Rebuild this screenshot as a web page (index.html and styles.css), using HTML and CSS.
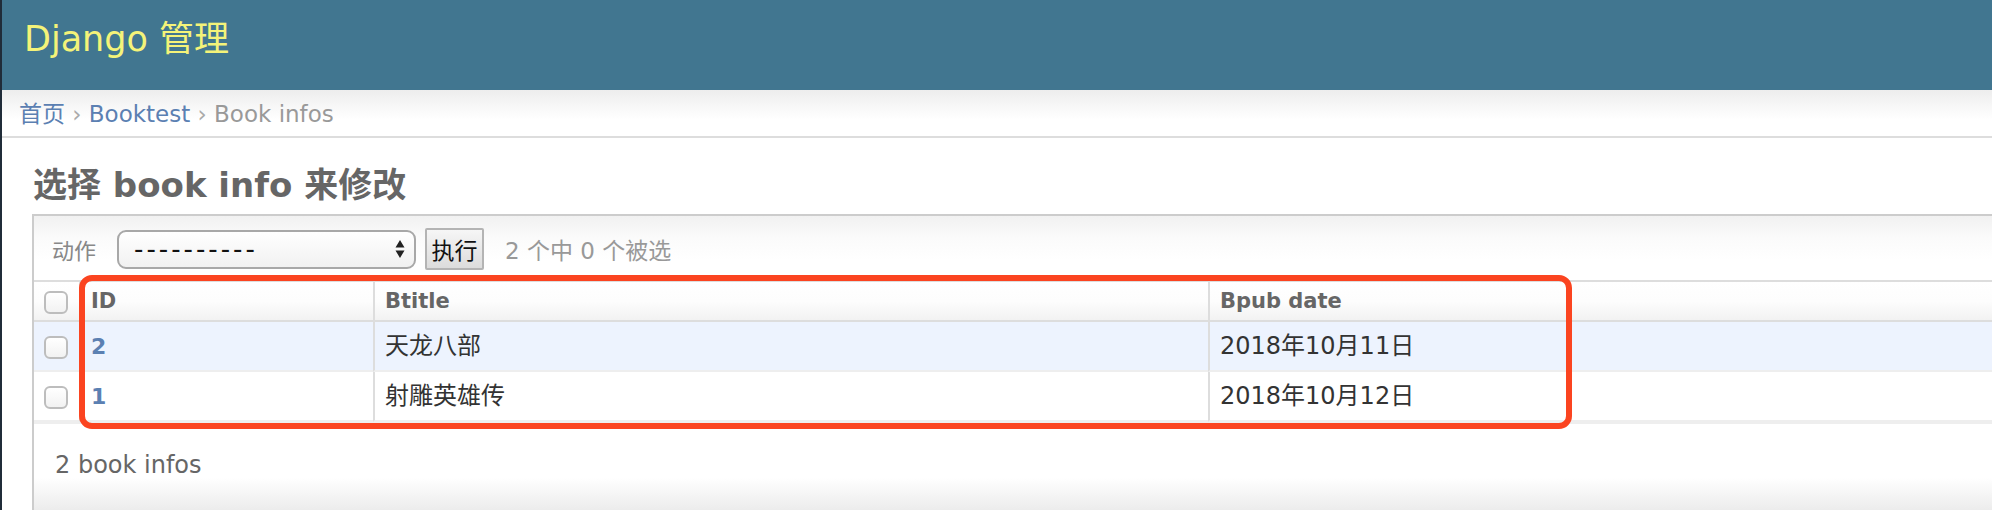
FILE: index.html
```html
<!DOCTYPE html>
<html lang="zh-CN">
<head>
<meta charset="utf-8">
<title>选择 book info 来修改 | Django 站点管理员</title>
<link rel="stylesheet" href="styles.css">
</head>
<body>
<div class="page">
  <header class="header">
    <div class="branding">Django 管理</div>
  </header>
  <nav class="breadcrumbs">
    <a href="#">首页</a><span class="sep"> › </span><a href="#">Booktest</a><span class="sep"> › </span><span class="current">Book infos</span>
  </nav>
  <main class="content">
    <h1 class="title">选择 book info 来修改</h1>
    <div class="module">
      <div class="actions">
        <span class="actions-label">动作</span>
        <div class="select">
          <span class="select-text">----------</span>
          <svg class="select-arrows" width="10" height="22" viewBox="0 0 10 22"><path d="M0.5 9.5 L5 2 L9.5 9.5 Z M0.5 12.5 L5 20 L9.5 12.5 Z" fill="#222"/></svg>
        </div>
        <button class="go" type="button">执行</button>
        <span class="counter">2 个中 0 个被选</span>
      </div>
      <table class="results">
        <thead>
          <tr>
            <th class="col-check"><span class="cb"></span></th>
            <th class="col-id">ID</th>
            <th class="col-title">Btitle</th>
            <th class="col-date">Bpub date</th>
          </tr>
        </thead>
        <tbody>
          <tr class="row-alt">
            <td class="col-check"><span class="cb"></span></td>
            <td class="col-id"><a href="#" class="id-link">2</a></td>
            <td class="col-title">天龙八部</td>
            <td class="col-date">2018年10月11日</td>
          </tr>
          <tr>
            <td class="col-check"><span class="cb"></span></td>
            <td class="col-id"><a href="#" class="id-link">1</a></td>
            <td class="col-title">射雕英雄传</td>
            <td class="col-date">2018年10月12日</td>
          </tr>
        </tbody>
      </table>
      <p class="paginator">2 book infos</p>
      <div class="highlight"></div>
    </div>
  </main>
</div>
</body>
</html>
```

FILE: styles.css
```css
html, body {
  margin: 0;
  padding: 0;
  background: #fff;
}

body {
  font-family: "DejaVu Sans", "Noto Sans CJK SC", sans-serif;
  color: #333;
  overflow: hidden;
}

.page {
  border-left: 2px solid #202c39;
  min-height: 510px;
  box-sizing: border-box;
}

.header {
  height: 90px;
  box-sizing: border-box;
  background: #417690;
  padding: 19px 0 0 22px;
}

.branding {
  color: #f4f379;
  font-size: 35px;
  line-height: 41px;
}

.breadcrumbs {
  height: 48px;
  box-sizing: border-box;
  padding: 11px 17px 0;
  background: linear-gradient(to bottom, #ededed 0, #fafafa 45%, #ffffff 65%);
  border-bottom: 2px solid #dddddd;
  font-size: 23px;
  line-height: 27px;
  color: #999;
}

.breadcrumbs a {
  color: #5b80b2;
  text-decoration: none;
}

.breadcrumbs .sep {
  color: #aaa;
}

.breadcrumbs .current {
  color: #999;
}

.content {
  padding: 0 0 0 30px;
}

.title {
  margin: 0 0 9px;
  padding: 27px 0 0 1px;
  font-size: 34px;
  line-height: 40px;
  font-weight: bold;
  color: #666;
}

.module {
  position: relative;
  border-top: 2px solid #cccccc;
  border-left: 2px solid #cccccc;
}

.actions {
  height: 64px;
  box-sizing: border-box;
  display: flex;
  align-items: center;
  padding: 2px 0 0 18px;
  background: linear-gradient(to bottom, #f1f1f1 0, #fbfbfb 35%, #ffffff 70%);
}

.actions-label {
  font-size: 22px;
  color: #888;
  margin-right: 21px;
}

.select {
  width: 299px;
  height: 39px;
  box-sizing: border-box;
  border: 2px solid #a8a8a8;
  border-radius: 9px;
  background: linear-gradient(to bottom, #ffffff, #f1f1f1);
  display: flex;
  align-items: center;
  justify-content: space-between;
  padding: 0 9px 0 15px;
}

.select-text {
  font-size: 26px;
  line-height: 28px;
  color: #111;
  letter-spacing: 3px;
}

.go {
  margin-left: 9px;
  width: 59px;
  height: 42px;
  box-sizing: border-box;
  border: 2px solid #b4b4b4;
  border-radius: 2px;
  background: linear-gradient(to bottom, #f6f6f6, #dcdcdc);
  font-family: "DejaVu Sans", "Noto Sans CJK SC", sans-serif;
  font-size: 23px;
  color: #111;
  padding: 0;
}

.counter {
  margin-left: 21px;
  font-size: 23px;
  color: #999;
}

.results {
  width: 100%;
  border-collapse: separate;
  border-spacing: 0;
  table-layout: fixed;
  border-top: 2px solid #dddddd;
}

.results th,
.results td {
  box-sizing: border-box;
  text-align: left;
  vertical-align: middle;
  padding: 0 10px;
}

.results th {
  height: 40px;
  background: linear-gradient(to bottom, #ffffff 0, #fdfdfd 50%, #f2f2f2 100%);
  border-bottom: 2px solid #dddddd;
  font-size: 21px;
  font-weight: bold;
  color: #666;
  line-height: 24px;
}

.results td {
  height: 50px;
  border-bottom: 2px solid #eeeeee;
  font-size: 24px;
  color: #333;
  line-height: 28px;
}

.results .row-alt td {
  background: #edf3fe;
}

.results .col-check {
  width: 45px;
  padding: 2px 0 0 10px;
}

.results .col-id {
  width: 294px;
  border-left: 2px solid #dddddd;
}

.results .col-title {
  width: 835px;
  border-left: 2px solid #dddddd;
}

.results .col-date {
  border-left: 2px solid #dddddd;
}

.id-link {
  color: #5b80b2;
  font-weight: bold;
  font-size: 22px;
  text-decoration: none;
}

.cb {
  display: block;
  width: 24px;
  height: 23px;
  box-sizing: border-box;
  border: 2px solid #bdbdbd;
  border-radius: 6px;
  background: linear-gradient(to bottom, #ffffff, #f2f2f2);
}

.paginator {
  margin: 0;
  height: 88px;
  box-sizing: border-box;
  padding: 28px 0 0 21px;
  border-top: 2px solid #eeeeee;
  background: linear-gradient(to bottom, #ffffff 0, #ffffff 62%, #ececec 100%);
  font-size: 24px;
  line-height: 27px;
  color: #666;
}

.highlight {
  position: absolute;
  left: 45px;
  top: 59px;
  width: 1493px;
  height: 154px;
  box-sizing: border-box;
  border: 6px solid #fb4420;
  border-radius: 13px;
  pointer-events: none;
}
```
